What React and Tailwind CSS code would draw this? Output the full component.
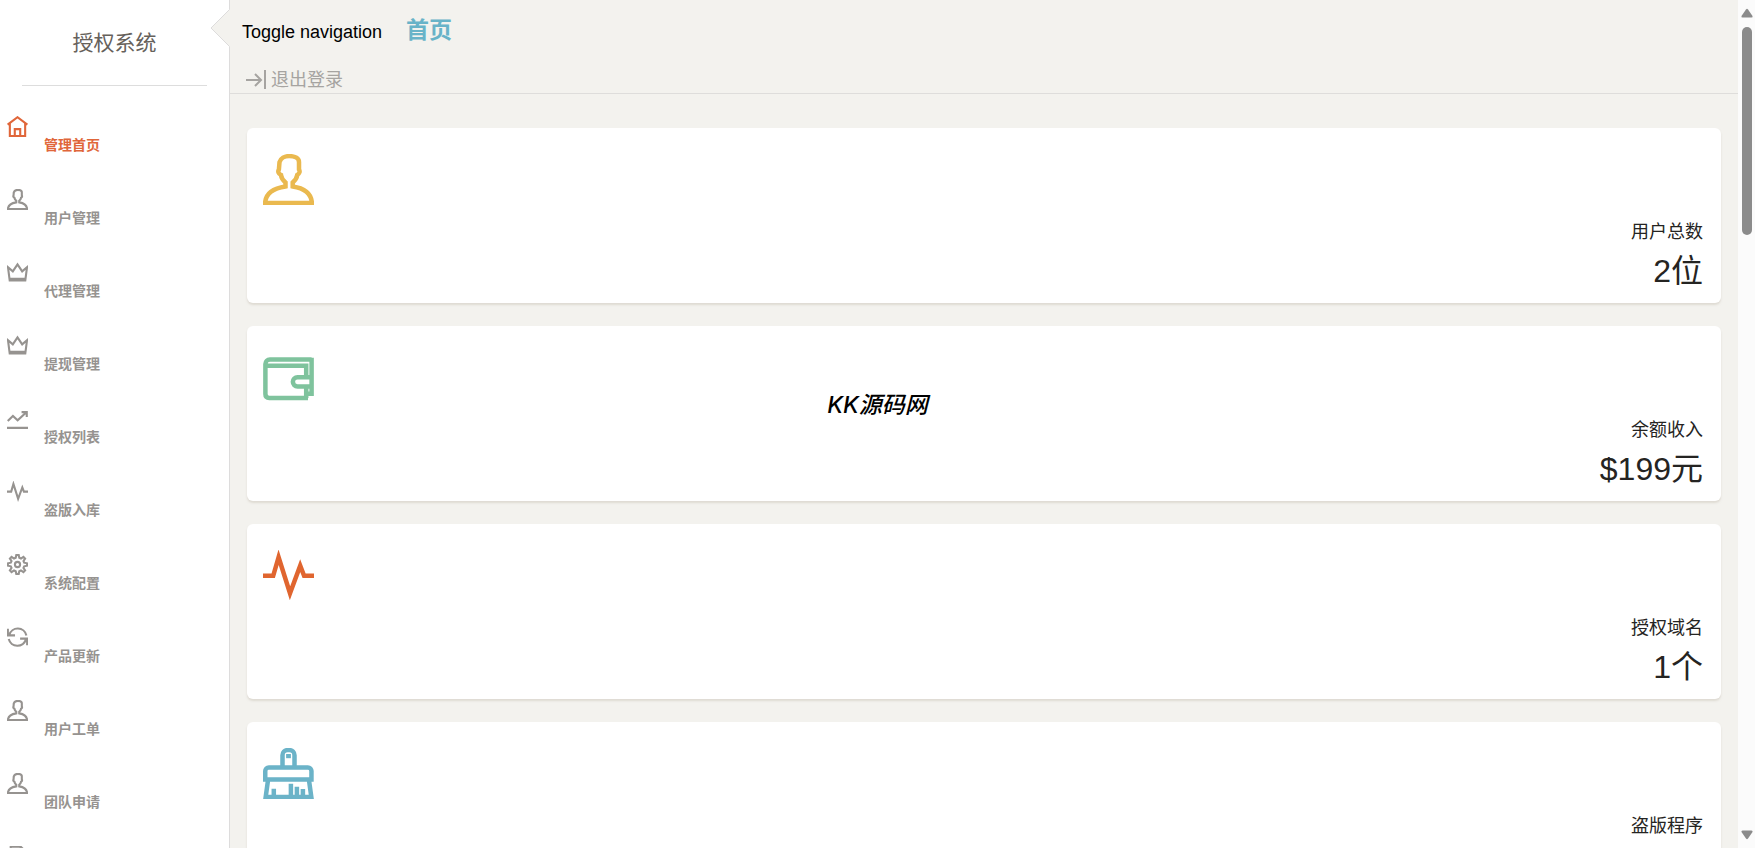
import clsx from 'clsx';

// eight-toothed outline for the settings icon
const gearPoints = Array.from({ length: 8 }, (_, i) =>
  [[-15, 5.6], [-7, 7.8], [7, 7.8], [15, 5.6]].map(([offset, radius]) => {
    const angle = ((i * 45 + offset) * Math.PI) / 180;
    return `${(8.5 + radius * Math.sin(angle)).toFixed(2)},${(8.5 - radius * Math.cos(angle)).toFixed(2)}`;
  })
)
  .flat()
  .join(' ');

const icons = {
  home: <path d="M.5 7 8.5 1l8 6M2.3 6v10.3h12.4V6M6.3 16v-5.4h4.4V16" />,
  user: (
    <path d="M.7 16.3C.9 13.2 3.3 11.4 7.5 10.8V9.5C6.7 8.8 6.1 8 6 7 5.1 6.5 4.9 5.8 5.3 5.2L5.5 2.7C5.9 1.5 7.2.7 8.7.7c2.1 0 3.3.8 3.3 2v2.5c.4.6.2 1.3-.6 1.8-.1 1-.7 1.8-1.5 2.5v1.3c4.1.6 6.2 2.4 6.4 5.5z" />
  ),
  crown: <path d="M.8 4.2 2.2 15h12.6l1.4-10.8-3.9 3.4L8.5 1.9 4.7 7.6zM2.2 13.6h12.6" />,
  stats: <path d="m.6 10.5 4.2-4 3.8 3.5 6.9-6.4M11.8 3.3H16v4M0 16.1h17" />,
  pulse: <path d="M0 8.6h3.4L5.2 2.4 9 14.4l3.4-9.2 1.3 3.4H17" />,
  settings: (
    <>
      <polygon points={gearPoints} />
      <circle cx="8.5" cy="8.5" r="2.1" />
    </>
  ),
  reload: (
    <path d="M.7 1.4v5.4h5.8M1.8 6.4a7.2 7.2 0 0 1 13.9.4M10.6 9.4h5.7v5.4M1.4 9.8a7.2 7.2 0 0 0 13.9.2" />
  ),
  file: <path d="M3 .65h8.2l3.2 3.2v12.5H3zM11 1v3h3" />,
  wallet: (
    <path d="M16.2 2.5H2.3A1.5 1.5 0 0 0 .8 4v10c0 .8.5 1.3 1.3 1.3h12.9M14.4 15.3v-3.8M1 4.6h13.4v3.8M16.2 1.9v12h-1.8M16.2 8.4h-4.7a1.55 1.55 0 0 0 0 3.1h4.7" />
  ),
  brush: (
    <>
      <path d="M6.5 6.4V2.4c0-1 .7-1.7 1.7-1.7h.6c1 0 1.7.7 1.7 1.7v4" />
      <path d="M.75 10.5V7.7c0-.7.5-1.2 1.2-1.2h13c.7 0 1.2.5 1.2 1.2v2.8zM1.7 10.5.9 16.3h15.2l-.8-5.8" />
      <path d="M3.6 13.6v2.7M9.3 11.9v4.4M11.3 12.9v3.4M13.3 13.7v2.6" />
      <path strokeWidth="1.6" d="M8.5 2v1.4" />
    </>
  ),
};

const navItems = [
  { label: '管理首页', icon: 'home', active: true },
  { label: '用户管理', icon: 'user' },
  { label: '代理管理', icon: 'crown' },
  { label: '提现管理', icon: 'crown' },
  { label: '授权列表', icon: 'stats' },
  { label: '盗版入库', icon: 'pulse' },
  { label: '系统配置', icon: 'settings' },
  { label: '产品更新', icon: 'reload' },
  { label: '用户工单', icon: 'user' },
  { label: '团队申请', icon: 'user' },
  { label: '文章管理', icon: 'file' },
];

const stats = [
  { label: '用户总数', value: '2位', icon: 'user', color: 'text-[#eab94f]' },
  { label: '余额收入', value: '$199元', icon: 'wallet', color: 'text-[#7fc39d]' },
  { label: '授权域名', value: '1个', icon: 'pulse', color: 'text-[#e0652f]' },
  { label: '盗版程序', value: '0个', icon: 'brush', color: 'text-[#6bb3c8]' },
];

function Icon({ name, stroke = 1.5, className }) {
  return (
    <svg viewBox="0 0 17 17" fill="none" stroke="currentColor" strokeWidth={stroke} className={className} aria-hidden="true">
      {icons[name]}
    </svg>
  );
}

function Sidebar() {
  return (
    <aside className="w-[230px] shrink-0 overflow-hidden border-r border-[#dddcdc] bg-white">
      <div className="mx-[22px] flex h-[86px] items-center justify-center border-b border-[#dddddd]">
        <a href="#" className="text-[21px] leading-7 text-[#66615b]">授权系统</a>
      </div>
      <nav className="pt-[30px]">
        {navItems.map((item, index) => (
          <a
            key={index}
            href="#"
            className={clsx(
              'flex h-[73px] items-start gap-4 pl-[7px] text-sm leading-5 font-bold',
              item.active ? 'text-[#e0663a]' : 'text-[#969390]'
            )}
          >
            <Icon name={item.icon} stroke={1.7} className="size-[21px] shrink-0" />
            <span className="pt-[19px]">{item.label}</span>
          </a>
        ))}
      </nav>
    </aside>
  );
}

function Header() {
  return (
    <header className="relative h-[94px] border-b border-[#dedddb] pl-3">
      <svg viewBox="0 0 20 38" className="absolute top-[9px] -left-5 h-[38px] w-5" aria-hidden="true">
        <path d="M20 0 1 19l19 19z" fill="#f3f2ee" />
        <path d="M19.5.5 1 19l18.5 18.5" fill="none" stroke="#dddcdc" />
      </svg>
      <div className="flex items-start gap-6 pt-[18px]">
        <button type="button" className="text-lg leading-7 text-black">Toggle navigation</button>
        <a href="#" className="text-[23px] leading-6 font-bold text-[#68b3c8]">首页</a>
      </div>
      <a href="#" className="mt-5 ml-1 flex w-fit items-center gap-[5px] text-lg leading-7 text-[#a6a4a1]">
        <svg viewBox="0 0 20 20" fill="none" stroke="currentColor" strokeWidth="2" className="size-5" aria-hidden="true">
          <path d="M0 10h15M9 4l6 6-6 6M19 0v19" />
        </svg>
        退出登录
      </a>
    </header>
  );
}

function StatCard({ stat }) {
  return (
    <section className="rounded-md bg-white px-4 pt-[26px] pb-[11px] shadow-[0_2px_2px_rgba(204,197,185,0.5)]">
      <Icon name={stat.icon} className={clsx('size-[51px]', stat.color)} />
      <div className="mt-[13px] pr-0.5 text-right text-[#252422]">
        <p className="text-lg leading-7">{stat.label}</p>
        <p className="mt-1 text-[32px] leading-[42px]">{stat.value}</p>
      </div>
    </section>
  );
}

function ScrollArrow({ className }) {
  return (
    <svg viewBox="0 0 12 10" className={clsx('h-[10px] w-3', className)} fill="currentColor">
      <path d="M5 1.5Q6 .2 7 1.5L11.5 8q.5 1.5-1 1.5h-9Q0 9.5.5 8z" />
    </svg>
  );
}

function ScrollRail() {
  return (
    <div className="flex w-[17px] shrink-0 flex-col items-center bg-[#fbfbfb] py-2 text-[#8b8b8b]" aria-hidden="true">
      <ScrollArrow />
      <div className="mt-[9px] h-1/4 w-[10px] rounded-full bg-[#8b8b8b]" />
      <ScrollArrow className="mt-auto rotate-180" />
    </div>
  );
}

export default function App() {
  return (
    <div className="relative flex h-screen overflow-hidden bg-[#f3f2ee] font-['Liberation_Sans','Noto_Sans_CJK_SC',sans-serif]">
      <Sidebar />
      <div className="min-w-0 flex-1">
        <Header />
        <main className="flex flex-col gap-[23px] px-[17px] pt-[34px]">
          {stats.map((stat) => (
            <StatCard key={stat.label} stat={stat} />
          ))}
        </main>
      </div>
      <ScrollRail />
      <div className="pointer-events-none absolute inset-x-0 top-[389px] text-center font-['Inter','Noto_Sans_CJK_SC',sans-serif] text-[23px] leading-8 font-medium text-black italic">
        KK源码网
      </div>
    </div>
  );
}
